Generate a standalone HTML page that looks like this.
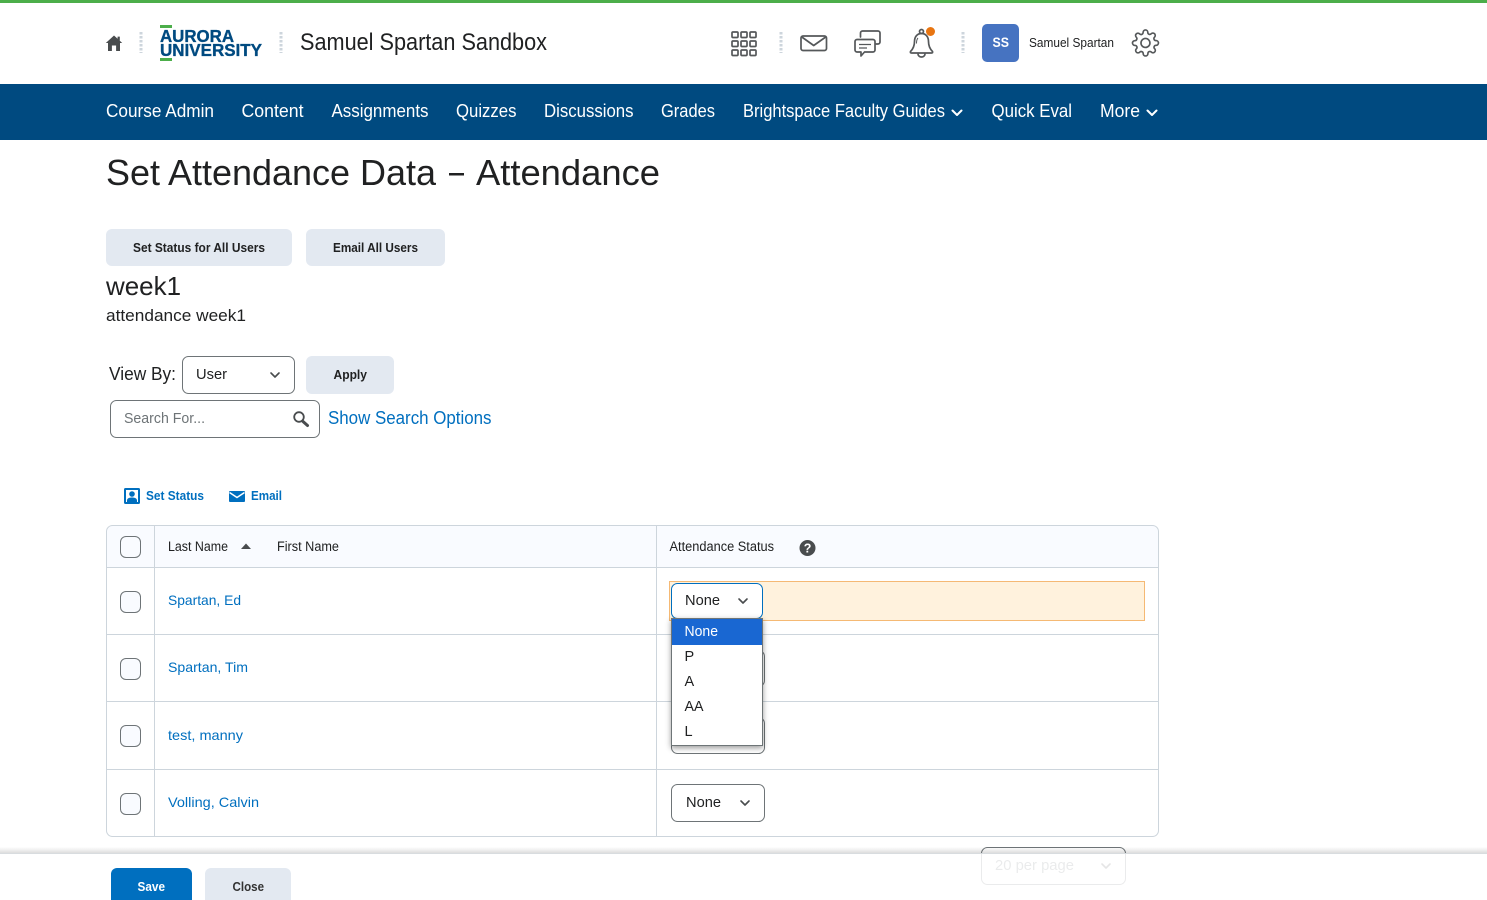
<!DOCTYPE html>
<html lang="en">
<head>
<meta charset="utf-8">
<title>Set Attendance Data - Attendance</title>
<style>
html,body{margin:0;padding:0;background:#fff;width:1487px;height:900px;overflow:hidden}
svg{display:block;position:absolute;left:0;top:0}
text{font-family:"Liberation Sans",sans-serif;fill:#202122;white-space:pre}
.b{font-weight:700}
.nav{font-size:18px;fill:#fff}
.l{fill:#006fbf}
.ln{stroke:#cdd5dc;stroke-width:1;fill:none}
.cb{fill:#f9fbff;stroke:#6e7477;stroke-width:1}
.sel{fill:#fff;stroke:#6e7477;stroke-width:1}
.ch{fill:none;stroke:#494c4e;stroke-width:1.6;stroke-linecap:round;stroke-linejoin:round}
.ic{fill:none;stroke:#55585a;stroke-width:1.7;stroke-linecap:round;stroke-linejoin:round}
.dot{stroke:#cdd5dc;stroke-width:3;stroke-dasharray:2.5 1.5;fill:none}
.logo{fill:#004a80;stroke:#004a80;stroke-width:.35}
</style>
</head>
<body>
<svg width="1487" height="900" viewBox="0 0 1487 900" xmlns="http://www.w3.org/2000/svg">
<defs>
<filter id="sh" x="-20%" y="-20%" width="140%" height="140%"><feDropShadow dx="0" dy="2" stdDeviation="3" flood-color="#000" flood-opacity=".4"/></filter>
<linearGradient id="bar" x1="0" y1="0" x2="0" y2="1"><stop offset="0" stop-color="#000" stop-opacity="0"/><stop offset="1" stop-color="#000" stop-opacity=".13"/></linearGradient>
</defs>

<!-- header -->
<rect width="1487" height="3" fill="#4cae4a"/>
<path d="M114 35.500l3.600 3.300V36.600h2.200v4.200l2.400 2.200h-2.200v8h-3.900v-5.500h-4.200v5.500H108v-8h-2.200z" fill="#494c4e"/>
<path class="dot" d="M141 32v21M281 32v21M781 32v21M963 32v21"/>
<rect x="160" y="25" width="12" height="3" fill="#4cae4a"/>
<rect x="160" y="58" width="12" height="3" fill="#4cae4a"/>
<text class="b logo" x="160" y="42" font-size="17.500" textLength="74" lengthAdjust="spacingAndGlyphs">AURORA</text>
<text class="b logo" x="160" y="56" font-size="17.500" textLength="102" lengthAdjust="spacingAndGlyphs">UNIVERSITY</text>
<text x="300" y="50" font-size="24" textLength="247" lengthAdjust="spacingAndGlyphs">Samuel Spartan Sandbox</text>

<g class="ic">
<rect x="732" y="32" width="6" height="5.500" rx="1"/><rect x="741" y="32" width="6" height="5.500" rx="1"/><rect x="750" y="32" width="6" height="5.500" rx="1"/>
<rect x="732" y="41" width="6" height="5.500" rx="1"/><rect x="741" y="41" width="6" height="5.500" rx="1"/><rect x="750" y="41" width="6" height="5.500" rx="1"/>
<rect x="732" y="50" width="6" height="5.500" rx="1"/><rect x="741" y="50" width="6" height="5.500" rx="1"/><rect x="750" y="50" width="6" height="5.500" rx="1"/>
</g>
<rect class="ic" x="801" y="36" width="25.500" height="14.500" rx="2"/>
<path class="ic" d="M802.500 37.500l11.200 8 11.300-8"/>
<path class="ic" d="M860.500 37v-4a2 2 0 0 1 2-2H878a2 2 0 0 1 2 2v9a2 2 0 0 1-2 2h-2"/>
<path class="ic" d="M857 39.500h16a2 2 0 0 1 2 2v8.500a2 2 0 0 1-2 2h-8.500l-3.500 4v-4H857a2 2 0 0 1-2-2v-8.500a2 2 0 0 1 2-2z"/>
<path d="M859 44.500h12M859 48h8" fill="none" stroke="#55585a" stroke-width="1.200"/>
<path class="ic" stroke-width="1.500" d="M921.500 33.500c-4.500 0-7 3.500-7 8 0 5-1.500 7.500-4 10-.5 1 0 1.500 1 1.500h20c1 0 1.500-.5 1-1.500-2.500-2.500-4-5-4-10 0-4.500-2.500-8-7-8z"/>
<circle class="ic" cx="921.500" cy="31.500" r="2" stroke-width="1.300"/>
<path class="ic" stroke-width="1.500" d="M918 54a3.500 3 0 0 0 7 0"/>
<path d="M918 38c-1.500 1.500-1.500 3.500-1.500 5.500" fill="none" stroke="#55585a" stroke-width="1"/>
<circle cx="930.500" cy="31.500" r="4.500" fill="#e87511"/>
<rect x="982" y="24" width="37" height="38" rx="5" fill="#4673c1"/>
<text class="b" x="992.500" y="47" font-size="14" textLength="16.500" lengthAdjust="spacingAndGlyphs" style="fill:#fff">SS</text>
<text x="1029" y="47" font-size="13" textLength="85" lengthAdjust="spacingAndGlyphs">Samuel Spartan</text>
<g transform="translate(1131.300 28.800) scale(1.180)" fill="none" stroke="#55585a" stroke-width="1.400" stroke-linecap="round" stroke-linejoin="round">
<circle cx="12" cy="12" r="3.800"/>
<path d="M19.400 15a1.650 1.650 0 0 0 .33 1.820l.06.06a2 2 0 0 1 0 2.830 2 2 0 0 1-2.830 0l-.06-.06a1.650 1.650 0 0 0-1.820-.33 1.650 1.650 0 0 0-1 1.510V21a2 2 0 0 1-2 2 2 2 0 0 1-2-2v-.09A1.650 1.650 0 0 0 9 19.400a1.650 1.650 0 0 0-1.820.33l-.06.06a2 2 0 0 1-2.830 0 2 2 0 0 1 0-2.830l.06-.06a1.650 1.650 0 0 0 .33-1.820 1.650 1.650 0 0 0-1.510-1H3a2 2 0 0 1-2-2 2 2 0 0 1 2-2h.09A1.650 1.650 0 0 0 4.600 9a1.650 1.650 0 0 0-.33-1.820l-.06-.06a2 2 0 0 1 0-2.830 2 2 0 0 1 2.830 0l.06.06a1.650 1.650 0 0 0 1.820.33H9a1.650 1.650 0 0 0 1-1.510V3a2 2 0 0 1 2-2 2 2 0 0 1 2 2v.09a1.650 1.650 0 0 0 1 1.510 1.650 1.650 0 0 0 1.820-.33l.06-.06a2 2 0 0 1 2.830 0 2 2 0 0 1 0 2.830l-.06.06a1.650 1.650 0 0 0-.33 1.820V9a1.650 1.650 0 0 0 1.510 1H21a2 2 0 0 1 2 2 2 2 0 0 1-2 2h-.09a1.650 1.650 0 0 0-1.510 1z"/>
</g>

<!-- nav -->
<rect y="84" width="1487" height="56" fill="#004a80"/>
<text class="nav" x="106" y="117" textLength="108" lengthAdjust="spacingAndGlyphs">Course Admin</text>
<text class="nav" x="241.500" y="117" textLength="62" lengthAdjust="spacingAndGlyphs">Content</text>
<text class="nav" x="331.500" y="117" textLength="97" lengthAdjust="spacingAndGlyphs">Assignments</text>
<text class="nav" x="456" y="117" textLength="60.500" lengthAdjust="spacingAndGlyphs">Quizzes</text>
<text class="nav" x="544" y="117" textLength="89.500" lengthAdjust="spacingAndGlyphs">Discussions</text>
<text class="nav" x="661" y="117" textLength="54" lengthAdjust="spacingAndGlyphs">Grades</text>
<text class="nav" x="743" y="117" textLength="202" lengthAdjust="spacingAndGlyphs">Brightspace Faculty Guides</text>
<path d="M952.500 110.500l4.500 4.500 4.500-4.500M1147.500 110.500l4.500 4.500 4.500-4.500" fill="none" stroke="#fff" stroke-width="2" stroke-linecap="round" stroke-linejoin="round"/>
<text class="nav" x="991.500" y="117" textLength="80.500" lengthAdjust="spacingAndGlyphs">Quick Eval</text>
<text class="nav" x="1100" y="117" textLength="40" lengthAdjust="spacingAndGlyphs">More</text>

<!-- page head -->
<text x="106" y="185" font-size="36" textLength="330" lengthAdjust="spacingAndGlyphs">Set Attendance Data</text>
<rect x="449" y="173" width="15" height="2.500" fill="#202122"/>
<text x="476" y="185" font-size="36" textLength="184" lengthAdjust="spacingAndGlyphs">Attendance</text>
<rect x="106" y="229" width="186" height="37" rx="6" fill="#e3e9f1"/>
<rect x="306" y="229" width="139" height="37" rx="6" fill="#e3e9f1"/>
<text class="b" x="133" y="252" font-size="13" textLength="132" lengthAdjust="spacingAndGlyphs">Set Status for All Users</text>
<text class="b" x="333" y="252" font-size="13" textLength="85" lengthAdjust="spacingAndGlyphs">Email All Users</text>
<text x="106" y="295" font-size="26" textLength="75" lengthAdjust="spacingAndGlyphs">week1</text>
<text x="106" y="321" font-size="17" textLength="140" lengthAdjust="spacingAndGlyphs">attendance week1</text>

<!-- filters -->
<text x="109" y="380" font-size="18" textLength="67" lengthAdjust="spacingAndGlyphs">View By:</text>
<rect class="sel" x="182.500" y="356.500" width="112" height="37" rx="6"/>
<text x="196" y="379" font-size="15" textLength="31" lengthAdjust="spacingAndGlyphs">User</text>
<path class="ch" d="M271 373l4 4 4-4"/>
<rect x="306" y="356" width="88" height="38" rx="6" fill="#e3e9f1"/>
<text class="b" x="333.500" y="379" font-size="13" textLength="33.500" lengthAdjust="spacingAndGlyphs">Apply</text>
<rect class="sel" x="110.500" y="400.500" width="209" height="37" rx="6"/>
<text x="124" y="423" font-size="15" textLength="81" lengthAdjust="spacingAndGlyphs" style="fill:#6e7477">Search For...</text>
<circle cx="299" cy="417" r="4.800" fill="none" stroke="#494c4e" stroke-width="1.800"/>
<path d="M303 421.500l4.500 4" fill="none" stroke="#494c4e" stroke-width="3" stroke-linecap="round"/>
<text class="l" x="328" y="424" font-size="18" textLength="163.500" lengthAdjust="spacingAndGlyphs">Show Search Options</text>

<!-- actions -->
<rect x="124" y="488" width="16" height="16" rx="1.500" fill="#006fbf"/>
<rect x="126" y="490" width="12" height="12" fill="#fff"/>
<circle cx="132" cy="494" r="2.800" fill="#006fbf"/>
<path d="M127 504v-3.500c0-2 2-3 5-3s5 1 5 3v3.500z" fill="#006fbf"/>
<text class="b l" x="146" y="500" font-size="13" textLength="58" lengthAdjust="spacingAndGlyphs">Set Status</text>
<rect x="229" y="491" width="16" height="11" rx="1" fill="#006fbf"/>
<path d="M229.500 492.500l7.500 5 7.500-5" fill="none" stroke="#fff" stroke-width="1.500"/>
<text class="b l" x="251" y="500" font-size="13" textLength="31" lengthAdjust="spacingAndGlyphs">Email</text>

<!-- table -->
<path d="M112 525.500H1153a5.500 5.500 0 0 1 5.500 5.500V567.500H106.500V531a5.500 5.500 0 0 1 5.500-5.500z" fill="#f9fbff"/>
<rect class="ln" x="106.500" y="525.500" width="1052" height="311" rx="6"/>
<path class="ln" d="M106.500 567.500H1158.500M106.500 634.500H1158.500M106.500 701.500H1158.500M106.500 769.500H1158.500M154.500 525.500V836.500M656.500 525.500V836.500"/>
<rect class="cb" x="120.500" y="536.500" width="20" height="21" rx="5.500"/>
<rect class="cb" x="120.500" y="591.500" width="20" height="21" rx="5.500"/>
<rect class="cb" x="120.500" y="658.500" width="20" height="21" rx="5.500"/>
<rect class="cb" x="120.500" y="725.500" width="20" height="21" rx="5.500"/>
<rect class="cb" x="120.500" y="793.500" width="20" height="21" rx="5.500"/>
<text x="168" y="551" font-size="13.500" textLength="60" lengthAdjust="spacingAndGlyphs">Last Name</text>
<path d="M241 549l5-5.500 5 5.500z" fill="#494c4e"/>
<text x="277" y="551" font-size="13.500" textLength="62" lengthAdjust="spacingAndGlyphs">First Name</text>
<text x="669.500" y="551" font-size="13.500" textLength="104.500" lengthAdjust="spacingAndGlyphs">Attendance Status</text>
<circle cx="807.500" cy="548" r="8" fill="#494c4e"/>
<text class="b" x="803.700" y="552.500" font-size="12.500" style="fill:#fff">?</text>
<text class="l" x="168" y="605" font-size="14" textLength="73" lengthAdjust="spacingAndGlyphs">Spartan, Ed</text>
<text class="l" x="168" y="672" font-size="14" textLength="80" lengthAdjust="spacingAndGlyphs">Spartan, Tim</text>
<text class="l" x="168" y="740" font-size="14" textLength="75" lengthAdjust="spacingAndGlyphs">test, manny</text>
<text class="l" x="168" y="807" font-size="14" textLength="91" lengthAdjust="spacingAndGlyphs">Volling, Calvin</text>

<rect x="669.500" y="581.500" width="475" height="39" fill="#fff2dd" stroke="#f5b974"/>
<rect x="671.500" y="650.500" width="93" height="36" rx="6" class="sel"/>
<rect x="671.500" y="717.500" width="93" height="36" rx="6" class="sel"/>
<rect x="671.500" y="784.500" width="93" height="37" rx="6" class="sel"/>
<text x="686" y="807" font-size="15" textLength="35" lengthAdjust="spacingAndGlyphs">None</text>
<path class="ch" d="M741 801l4 4 4-4"/>

<rect x="671.500" y="583.500" width="91" height="35" rx="6" fill="#fff" stroke="#006fbf"/>
<text x="685" y="605" font-size="15" textLength="35" lengthAdjust="spacingAndGlyphs">None</text>
<path class="ch" d="M739 599l4 4 4-4"/>

<!-- open list -->
<rect x="671.500" y="618.500" width="91" height="127" fill="#fff" stroke="#6e7477" filter="url(#sh)"/>
<rect x="672" y="619" width="90" height="26" fill="#1967d2"/>
<text x="684.500" y="636" font-size="14.500" textLength="33.500" lengthAdjust="spacingAndGlyphs" style="fill:#fff">None</text>
<text x="684.500" y="661" font-size="14.500">P</text>
<text x="684.500" y="686" font-size="14.500">A</text>
<text x="684.500" y="711" font-size="14.500" textLength="19" lengthAdjust="spacingAndGlyphs">AA</text>
<text x="684.500" y="736" font-size="14.500">L</text>

<!-- pager under sticky bar -->
<rect class="sel" x="981.500" y="847.500" width="144" height="37" rx="6"/>
<text x="995" y="870" font-size="15" textLength="79" lengthAdjust="spacingAndGlyphs" style="fill:#6e7477">20 per page</text>
<path class="ch" d="M1102 864l4 4 4-4"/>

<!-- sticky bar -->
<rect y="847" width="1487" height="6" fill="url(#bar)"/>
<rect y="853" width="1487" height="47" fill="#fff" fill-opacity=".86"/>
<rect y="853" width="1487" height="1" fill="#d8dcdf"/>
<path d="M117 868h69a6 6 0 0 1 6 6v26h-81v-26a6 6 0 0 1 6-6z" fill="#006fbf"/>
<text class="b" x="137.500" y="891" font-size="13" textLength="27.500" lengthAdjust="spacingAndGlyphs" style="fill:#fff">Save</text>
<path d="M211 868h74a6 6 0 0 1 6 6v26h-86v-26a6 6 0 0 1 6-6z" fill="#e3e9f1"/>
<text class="b" x="232.500" y="891" font-size="13" textLength="31.500" lengthAdjust="spacingAndGlyphs" style="fill:#333">Close</text>
</svg>
</body>
</html>
